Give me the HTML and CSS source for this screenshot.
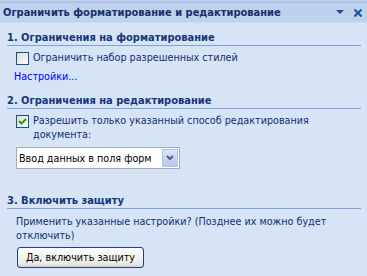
FILE: index.html
```html
<!DOCTYPE html>
<html lang="ru">
<head>
<meta charset="utf-8">
<link rel="stylesheet" href="styles.css">
</head>
<body>
<div class="pane">
  <div class="strip"></div>
  <div class="title">
    <span class="title-text">Ограничить форматирование и редактирование</span>
    <span class="title-icons">
      <svg width="8" height="5" viewBox="0 0 8 5"><path d="M0 0H8L4 4Z" fill="#1b4f9c"/></svg>
      <svg width="8" height="8" viewBox="0 0 8 8"><path d="M0.5 0.5L7.5 7.5M7.5 0.5L0.5 7.5" stroke="#1b4f9c" stroke-width="2"/></svg>
    </span>
  </div>
  <div class="body">
    <div class="section">
      <div class="heading">1. Ограничения на форматирование</div>
      <div class="check-row"><span class="box"></span><span class="label">Ограничить набор разрешенных стилей</span></div>
      <div class="link">Настройки...</div>
    </div>
    <div class="section s2">
      <div class="heading">2. Ограничения на редактирование</div>
      <div class="check-row"><span class="box"><svg width="11" height="11" viewBox="0 0 11 11"><path d="M2 5L4.5 7.5L9 3" stroke="#21a121" stroke-width="2" fill="none"/></svg></span><span class="label">Разрешить только указанный способ редактирования<br>документа:</span></div>
      <div class="select"><span class="select-text">Ввод данных в поля форм</span><span class="select-btn"><svg width="8" height="6" viewBox="0 0 8 6"><path d="M1 1L4 4L7 1" stroke="#4d6185" stroke-width="2" fill="none"/></svg></span></div>
    </div>
    <div class="section s3">
      <div class="heading">3. Включить защиту</div>
      <div class="para">Применить указанные настройки? (Позднее их можно будет<br>отключить)</div>
      <div class="button">Да, включить защиту</div>
    </div>
  </div>
</div>
</body>
</html>
```
FILE: styles.css
```css
html, body { margin: 0; padding: 0; }
body { width: 367px; height: 276px; overflow: hidden; background: #d6e4f5; font-family: "DejaVu Sans Condensed", "DejaVu Sans", sans-serif; font-stretch: condensed; font-size: 10.7px; }
.pane { display: flex; flex-direction: column; height: 276px; background: #d6e4f5; }
.strip { height: 3px; background: linear-gradient(#c3d5ee, #9db8df); }
.title { height: 19px; background: #bed2ee; display: flex; align-items: center; justify-content: space-between; padding: 0 5px 0 3px; border-bottom: 1px solid #c9daf0; }
.title-text { font-weight: bold; color: #15316b; font-size: 11px; }
.title-icons { display: flex; align-items: center; gap: 10px; }
.body { padding: 0 6px 0 7px; }
.heading { font-weight: bold; color: #15367a; font-size: 11px; padding: 9px 0 1px 0; line-height: 12px; border-bottom: 1px solid #7f9fe0; }
.check-row { display: flex; align-items: flex-start; gap: 4px; padding-left: 9px; margin-top: 5px; color: #0f2e78; line-height: 14px; }
.box { width: 11px; height: 11px; border: 1px solid #1c5180; background: linear-gradient(135deg, #dcdcd6, #ffffff); flex: none; display: flex; align-items: center; justify-content: center; margin-top: 1px; }
.link { color: #0000ff; margin-top: 5px; padding-left: 7px; line-height: 14px; }
.s2 .heading { padding-top: 11px; }
.select { margin-top: 5px; margin-left: 9px; width: 162px; height: 20px; border: 1px solid #a5acb5; background: #fff; display: flex; align-items: center; justify-content: space-between; }
.select-text { color: #000; padding-left: 2px; }
.select-btn { width: 16px; height: 18px; margin-right: 1px; background: linear-gradient(#dbe5f8, #b6c8ed); border: 1px solid #b1c3e6; box-sizing: border-box; display: flex; align-items: center; justify-content: center; }
.s3 .heading { padding-top: 26px; }
.para { color: #0f2e78; padding-left: 9px; margin-top: 6px; line-height: 14px; }
.button { margin-top: 4px; margin-left: 10px; width: 127px; height: 21px; box-sizing: border-box; border: 1px solid #1e3f8a; border-radius: 3px; background: linear-gradient(#ffffff, #ecebe6 80%, #d6d0c5); display: flex; align-items: center; justify-content: center; color: #000; }
```
